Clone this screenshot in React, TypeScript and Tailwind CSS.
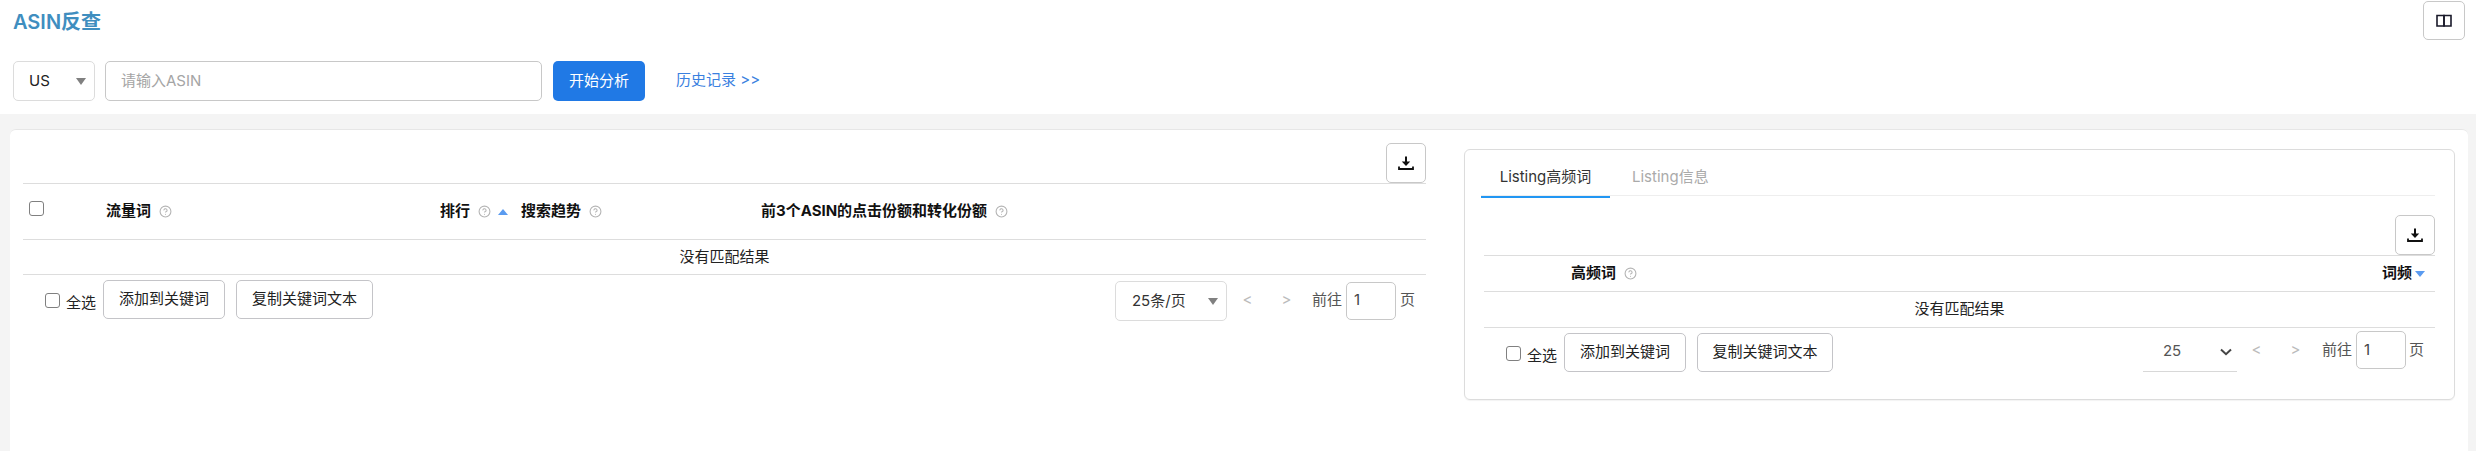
import React from "react";
import { CircleHelp } from "lucide-react";

const font = { fontFamily: "Inter, 'Noto Sans CJK SC', sans-serif" };

function Help({ className = "" }: { className?: string }) {
  return <CircleHelp size={13} strokeWidth={2} className={"text-[#b4b4b4] shrink-0 " + className} />;
}

function Box() {
  return <input type="checkbox" className="appearance-none w-[15px] h-[15px] border-[1.5px] border-[#808080] rounded-[3px] bg-white shrink-0 m-0" />;
}

function OutlineBtn({ children, w }: { children: React.ReactNode; w: string }) {
  return (
    <button className={"h-[39px] border border-[#c4c4c8] rounded-[5px] bg-white text-[15px] text-[#222] flex items-center justify-center " + w}>
      {children}
    </button>
  );
}

function DownloadBtn() {
  return (
    <button className="w-[40px] h-[40px] border border-[#c8c8c8] rounded-[5px] bg-white flex items-center justify-center">
      <svg width="16" height="16" viewBox="0 0 16 16" fill="none">
        <path d="M8 1.5V8" stroke="#111" strokeWidth="2" />
        <path d="M3.8 6.4H12.2L8 11Z" fill="#111" />
        <path d="M1 11.5V14H15V11.5" stroke="#111" strokeWidth="1.8" />
      </svg>
    </button>
  );
}

function Tri({ up }: { up?: boolean }) {
  return (
    <svg width="10" height="6" viewBox="0 0 10 6" className="shrink-0">
      <path d={up ? "M5 0L10 6H0Z" : "M5 6L10 0H0Z"} fill="#5a9bf0" />
    </svg>
  );
}

function TriGrey() {
  return (
    <svg width="10" height="7" viewBox="0 0 10 7" className="shrink-0">
      <path d="M0 0H10L5 7Z" fill="#808080" />
    </svg>
  );
}

function Th({ children }: { children: React.ReactNode }) {
  return <span className="text-[15px] font-bold text-[#111] whitespace-nowrap">{children}</span>;
}

function Pager() {
  return (
    <>
      <span className="text-[#bbbbbb] text-[15px] w-[39px] text-center">&lt;</span>
      <span className="text-[#bbbbbb] text-[15px] w-[39px] text-center">&gt;</span>
    </>
  );
}

function Goto({ tail }: { tail: string }) {
  return (
    <div className="flex items-center text-[15px] text-[#555]">
      <span className="mr-[4px]">前往</span>
      <span className="w-[50px] h-[38px] border border-[#c8c8c8] rounded-[5px] pl-[7px] flex items-center text-[#444]">1</span>
      <span className={tail}>页</span>
    </div>
  );
}

function SelectAll() {
  return (
    <label className="flex items-center text-[15px] text-[#222]">
      <span className="mt-[2px] flex"><Box /></span>
      <span className="ml-[6px] mr-[7px] mt-[7px]">全选</span>
    </label>
  );
}

export default function App() {
  return (
    <div style={font} className="h-[451px] w-[2476px] overflow-hidden bg-[#f4f4f4] flex flex-col">
      <header className="bg-white h-[114px] shrink-0 flex flex-col pl-[13px] pr-[11px]">
        <div className="h-[41px] flex items-start justify-between">
          <h1 className="text-[20px] leading-[24px] mt-[10px] font-semibold text-[#3f8ebf]">ASIN反查</h1>
          <button className="w-[42px] h-[39px] mt-[1px] border border-[#c8c8c8] rounded-[5px] bg-white flex items-center justify-center">
            <svg width="16" height="14" viewBox="0 0 16 14" fill="none" stroke="#1a1a2a" strokeWidth="1.6">
              <path d="M1 1.5H8V12H1Z" />
              <path d="M8 1.5H15V12H8Z" />
            </svg>
          </button>
        </div>
        <div className="flex items-center mt-[20px] h-[40px]">
          <div className="w-[82px] h-[40px] border border-[#dcdcdc] rounded-[5px] flex items-center justify-between pl-[15px] pr-[8px] text-[15px] text-[#222]">
            <span>US</span>
            <TriGrey />
          </div>
          <div className="w-[437px] h-[40px] ml-[10px] border border-[#c8c8c8] rounded-[5px] flex items-center pl-[15px] text-[15px] text-[#a5a5a5]">
            请输入ASIN
          </div>
          <button className="w-[92px] h-[40px] ml-[11px] bg-[#2079e5] rounded-[5px] text-white text-[15px]">开始分析</button>
          <a className="ml-[31px] text-[15px] text-[#3a80e0] -mt-[1px]">历史记录 &gt;&gt;</a>
        </div>
      </header>

      <main className="mt-[15px] ml-[10px] mr-[8px] flex-1 bg-white rounded-t-[6px] border-t border-[#e6e6e6] flex pl-[13px] pr-[13px]">
        <section className="w-[1403px] shrink-0">
          <div className="h-[53px] pt-[13px] flex justify-end">
            <DownloadBtn />
          </div>
          <div className="h-[57px] border-t border-b border-[#dddddd] grid grid-cols-[83px_334px_81px_240px_1fr] items-center">
            <span className="pl-[6px] -mt-[6px] flex"><Box /></span>
            <span className="flex items-center gap-[8px]"><Th>流量词</Th><Help /></span>
            <span className="flex items-center"><Th>排行</Th><Help className="ml-[8px]" /><span className="ml-[7px]"><Tri up /></span></span>
            <span className="flex items-center gap-[8px]"><Th>搜索趋势</Th><Help /></span>
            <span className="flex items-center gap-[8px]"><Th>前3个ASIN的点击份额和转化份额</Th><Help /></span>
          </div>
          <div className="h-[35px] border-b border-[#dddddd] flex items-center justify-center text-[15px] text-[#222]">没有匹配结果</div>
          <div className="flex items-start justify-between pt-[5px]">
            <div className="flex items-center pl-[22px]">
              <SelectAll />
              <OutlineBtn w="w-[122px]">添加到关键词</OutlineBtn>
              <span className="w-[11px]" />
              <OutlineBtn w="w-[137px]">复制关键词文本</OutlineBtn>
            </div>
            <div className="flex items-center pr-[11px]">
              <div className="w-[112px] h-[40px] mt-[1px] border border-[#dcdcdc] rounded-[5px] flex items-center justify-between pl-[16px] pr-[8px] text-[15px] text-[#333]">
                <span>25条/页</span>
                <TriGrey />
              </div>
              <span className="w-[1px]" />
              <Pager />
              <span className="w-[6px]" />
              <Goto tail="ml-[4px]" />
            </div>
          </div>
        </section>

        <section className="ml-[38px] w-[991px] h-[251px] mt-[19px] border border-[#dcdcdc] rounded-[6px] shadow-[0_1px_1px_rgba(0,0,0,0.05)] flex flex-col pl-[16px] pr-[19px]">
          <div className="h-[46px] flex items-start border-b border-[#eeeeee] shrink-0">
            <div className="w-[129px] h-[48px] pt-[8px] border-b-[2px] border-[#2196f3] shrink-0 flex items-center justify-center text-[15px] text-[#333]">Listing高频词</div>
            <div className="ml-[22px] h-[46px] pt-[8px] flex items-center text-[15px] text-[#aaaaaa]">Listing信息</div>
          </div>
          <div className="ml-[3px] flex flex-col">
            <div className="h-[59px] pt-[19px] flex justify-end"><DownloadBtn /></div>
            <div className="h-[37px] border-t border-b border-[#dddddd] flex items-center justify-between pl-[87px] pr-[10px]">
              <span className="flex items-center gap-[8px]"><Th>高频词</Th><Help /></span>
              <span className="flex items-center gap-[3px]"><Th>词频</Th><Tri /></span>
            </div>
            <div className="h-[36px] border-b border-[#dddddd] flex items-center justify-center text-[15px] text-[#222]">没有匹配结果</div>
            <div className="flex items-start justify-between pt-[3px]">
              <div className="flex items-center pl-[22px] mt-[2px]">
                <SelectAll />
                <OutlineBtn w="w-[122px]">添加到关键词</OutlineBtn>
                <span className="w-[11px]" />
                <OutlineBtn w="w-[136px]">复制关键词文本</OutlineBtn>
              </div>
              <div className="flex items-start pr-[11px]">
                <div className="w-[94px] h-[40px] mt-[1px] border-b border-[#d8d8d8] flex items-center justify-between pl-[20px] pr-[5px] text-[15px] text-[#555]">
                  <span>25</span>
                  <svg width="12" height="8" viewBox="0 0 12 8" fill="none"><path d="M1 1.5L6 6.2L11 1.5" stroke="#444" strokeWidth="2" /></svg>
                </div>
                <div className="flex items-center h-[38px]"><Pager /></div>
                <span className="w-[7px]" />
                <Goto tail="ml-[3px]" />
              </div>
            </div>
          </div>
        </section>
      </main>
    </div>
  );
}
